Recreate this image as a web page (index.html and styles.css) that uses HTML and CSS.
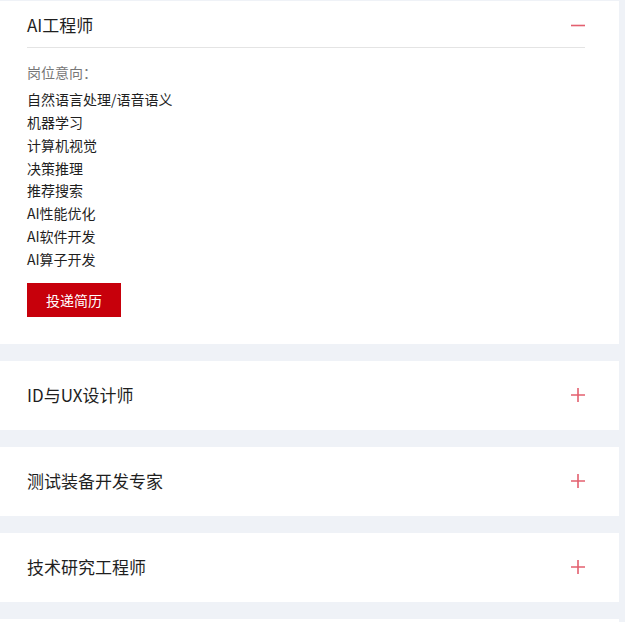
FILE: index.html
```html
<!DOCTYPE html>
<html lang="zh-CN">
<head>
<meta charset="utf-8">
<title>岗位列表</title>
<link rel="stylesheet" href="styles.css">
</head>
<body>
<div class="list">
  <section class="card card-open">
    <div class="card-head head-open">
      <h3 class="title">AI工程师</h3>
      <svg class="toggle" width="14" height="14" viewBox="0 0 14 14"><path d="M0 7.5H14" stroke="#e3606f" stroke-width="1.6"/></svg>
    </div>
    <div class="card-body">
      <p class="label">岗位意向：</p>
      <ul class="items">
        <li>自然语言处理/语音语义</li>
        <li>机器学习</li>
        <li>计算机视觉</li>
        <li>决策推理</li>
        <li>推荐搜索</li>
        <li>AI性能优化</li>
        <li>AI软件开发</li>
        <li>AI算子开发</li>
      </ul>
      <a class="apply" href="#">投递简历</a>
    </div>
  </section>
  <section class="card">
    <div class="card-head">
      <h3 class="title">ID与UX设计师</h3>
      <svg class="toggle" width="14" height="14" viewBox="0 0 14 14"><path d="M0 7H14M7 0V14" stroke="#e3606f" stroke-width="1.6"/></svg>
    </div>
  </section>
  <section class="card">
    <div class="card-head">
      <h3 class="title">测试装备开发专家</h3>
      <svg class="toggle" width="14" height="14" viewBox="0 0 14 14"><path d="M0 7H14M7 0V14" stroke="#e3606f" stroke-width="1.6"/></svg>
    </div>
  </section>
  <section class="card">
    <div class="card-head">
      <h3 class="title">技术研究工程师</h3>
      <svg class="toggle" width="14" height="14" viewBox="0 0 14 14"><path d="M0 7H14M7 0V14" stroke="#e3606f" stroke-width="1.6"/></svg>
    </div>
  </section>
  <section class="card card-next"></section>
</div>
</body>
</html>
```

FILE: styles.css
```css
* { box-sizing: border-box; }
html, body {
  margin: 0;
  padding: 0;
  background: #eff2f7;
  font-family: "Noto Sans CJK SC", "Noto Sans", sans-serif;
  color: #1f1f1f;
}
.list {
  width: 619px;
  padding-top: 1px;
  display: flex;
  flex-direction: column;
  gap: 17px;
}
.card {
  background: #fff;
  padding: 0 34px 0 27px;
}
.card-open {
  padding-bottom: 27px;
}
.card-next {
  height: 69px;
}
.card-head {
  height: 69px;
  display: flex;
  align-items: center;
  justify-content: space-between;
}
.head-open {
  height: 47px;
  padding-top: 2px;
  border-bottom: 1px solid #e4e4e4;
}
.title {
  margin: 0;
  font-size: 17px;
  font-weight: 400;
  line-height: 24px;
  color: #1f1f1f;
}
.toggle {
  display: block;
  flex: none;
}
.card-body {
  padding-top: 13px;
}
.label {
  margin: 0 0 4px;
  font-size: 14px;
  line-height: 23px;
  color: #777;
}
.items {
  margin: 0;
  padding: 0;
  list-style: none;
  font-size: 14px;
  line-height: 22.86px;
  color: #1f1f1f;
}
.apply {
  display: flex;
  align-items: center;
  justify-content: center;
  width: 94px;
  height: 34px;
  margin-top: 12px;
  background: #c7000b;
  color: #fff;
  font-size: 14px;
  text-decoration: none;
}
```
